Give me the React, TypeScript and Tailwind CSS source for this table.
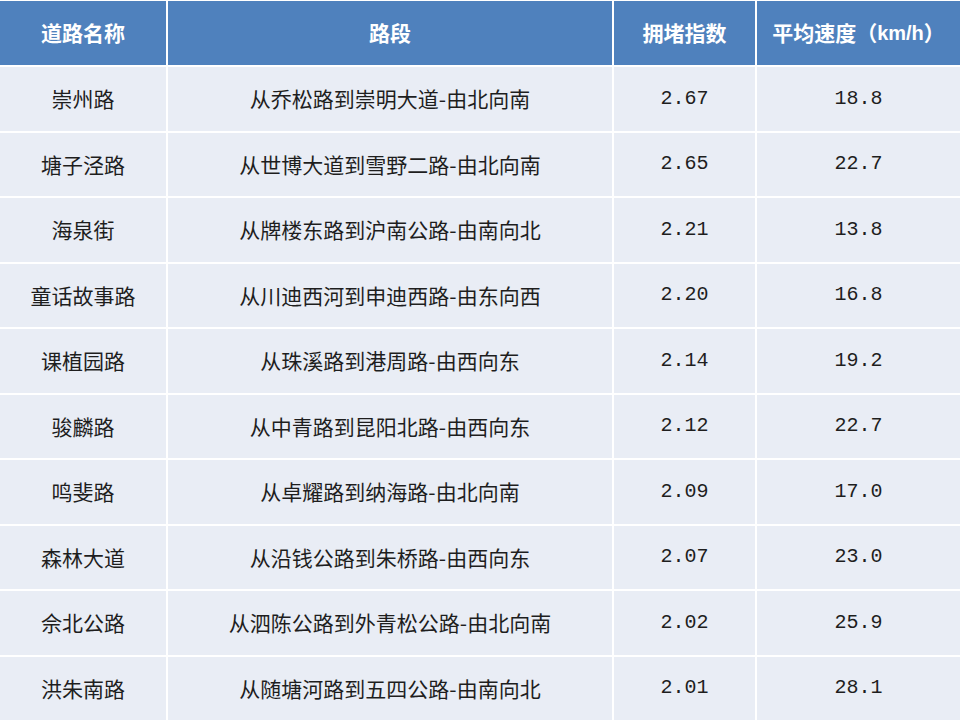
const rows: [string, string, string, string][] = [
  ['崇州路', '从乔松路到崇明大道-由北向南', '2.67', '18.8'],
  ['塘子泾路', '从世博大道到雪野二路-由北向南', '2.65', '22.7'],
  ['海泉街', '从牌楼东路到沪南公路-由南向北', '2.21', '13.8'],
  ['童话故事路', '从川迪西河到申迪西路-由东向西', '2.20', '16.8'],
  ['课植园路', '从珠溪路到港周路-由西向东', '2.14', '19.2'],
  ['骏麟路', '从中青路到昆阳北路-由西向东', '2.12', '22.7'],
  ['鸣斐路', '从卓耀路到纳海路-由北向南', '2.09', '17.0'],
  ['森林大道', '从沿钱公路到朱桥路-由西向东', '2.07', '23.0'],
  ['佘北公路', '从泗陈公路到外青松公路-由北向南', '2.02', '25.9'],
  ['洪朱南路', '从随塘河路到五四公路-由南向北', '2.01', '28.1'],
];

const cjk = "font-['Noto_Sans_CJK_SC',sans-serif]";
const mono = "font-['Liberation_Mono','Noto_Sans_CJK_SC',monospace]";

export default function App() {
  return (
    <div className="w-[960px] h-[720px] bg-white overflow-hidden">
      <div className="grid h-full grid-cols-[166px_444px_141px_1fr] grid-rows-[64px_repeat(10,1fr)] gap-[2px] pt-px">
        {['道路名称', '路段', '拥堵指数'].map((h) => (
          <div key={h} className={`flex items-center justify-center bg-[#4f81bd] text-white text-[21px] font-bold ${cjk}`}>
            {h}
          </div>
        ))}
        <div className={`flex items-center justify-center bg-[#4f81bd] text-white text-[21px] font-bold ${cjk}`}>
          平均速度（<span className="font-['Liberation_Sans',sans-serif] text-[20px]">km/h</span>）
        </div>
        {rows.map((r) => (
          <div key={r[0]} className="contents">
            <div className={`flex items-center justify-center bg-[#e9edf5] text-[#1e1e1e] text-[21px] ${cjk}`}>{r[0]}</div>
            <div className={`flex items-center justify-center bg-[#e9edf5] text-[#1e1e1e] text-[21px] ${cjk}`}>{r[1]}</div>
            <div className={`flex items-center justify-center bg-[#e9edf5] text-[#1e1e1e] text-[20px] ${mono}`}>{r[2]}</div>
            <div className={`flex items-center justify-center bg-[#e9edf5] text-[#1e1e1e] text-[20px] ${mono}`}>{r[3]}</div>
          </div>
        ))}
      </div>
    </div>
  );
}
